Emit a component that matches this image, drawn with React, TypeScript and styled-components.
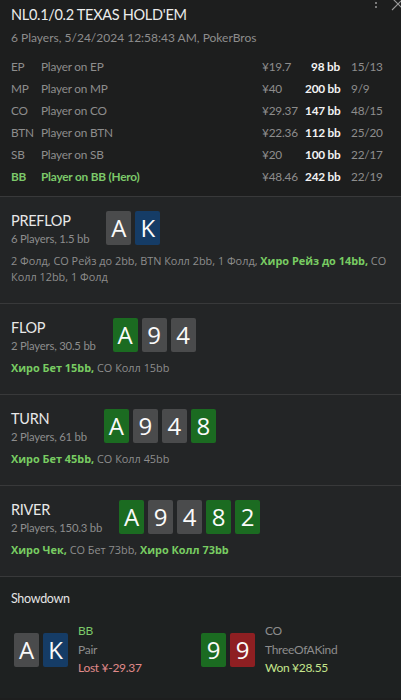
import styled, { createGlobalStyle } from "styled-components"

const GlobalStyle = createGlobalStyle`
  html, body {
    margin: 0;
    padding: 0;
    background: #1d1e1e;
  }
  body {
    font-family: Lato, "Open Sans", sans-serif;
    color: #e6e6e6;
  }
`

type Suit = "s" | "h" | "d" | "c"

const suitColor: Record<Suit, string> = {
  s: "#4a4b4c",
  h: "#8e1f22",
  d: "#153c66",
  c: "#1b6b21",
}

interface Player {
  pos: string
  name: string
  stack: string
  bb: string
  stats: string
  hero?: boolean
}

const players: Player[] = [
  { pos: "EP", name: "Player on EP", stack: "¥19.7", bb: "98 bb", stats: "15/13" },
  { pos: "MP", name: "Player on MP", stack: "¥40", bb: "200 bb", stats: "9/9" },
  { pos: "CO", name: "Player on CO", stack: "¥29.37", bb: "147 bb", stats: "48/15" },
  { pos: "BTN", name: "Player on BTN", stack: "¥22.36", bb: "112 bb", stats: "25/20" },
  { pos: "SB", name: "Player on SB", stack: "¥20", bb: "100 bb", stats: "22/17" },
  { pos: "BB", name: "Player on BB (Hero)", stack: "¥48.46", bb: "242 bb", stats: "22/19", hero: true },
]

type Action = { text: string; hero?: boolean }

interface Street {
  name: string
  info: string
  cards: [string, Suit][]
  actions: Action[]
}

const streets: Street[] = [
  {
    name: "PREFLOP",
    info: "6 Players, 1.5 bb",
    cards: [["A", "s"], ["K", "d"]],
    actions: [
      { text: "2 Фолд" },
      { text: "CO Рейз до 2bb" },
      { text: "BTN Колл 2bb" },
      { text: "1 Фолд" },
      { text: "Хиро Рейз до 14bb", hero: true },
      { text: "CO Колл 12bb" },
      { text: "1 Фолд" },
    ],
  },
  {
    name: "FLOP",
    info: "2 Players, 30.5 bb",
    cards: [["A", "c"], ["9", "s"], ["4", "s"]],
    actions: [{ text: "Хиро Бет 15bb", hero: true }, { text: "CO Колл 15bb" }],
  },
  {
    name: "TURN",
    info: "2 Players, 61 bb",
    cards: [["A", "c"], ["9", "s"], ["4", "s"], ["8", "c"]],
    actions: [{ text: "Хиро Бет 45bb", hero: true }, { text: "CO Колл 45bb" }],
  },
  {
    name: "RIVER",
    info: "2 Players, 150.3 bb",
    cards: [["A", "c"], ["9", "s"], ["4", "s"], ["8", "c"], ["2", "c"]],
    actions: [
      { text: "Хиро Чек", hero: true },
      { text: "CO Бет 73bb" },
      { text: "Хиро Колл 73bb", hero: true },
    ],
  },
]

const Page = styled.div`
  width: 401px;
  min-height: 700px;
  background: #1d1e1e;
`

const Header = styled.header`
  position: relative;
  padding: 5px 12px 8px 11px;
  border-bottom: 1px solid #38393a;
`

const Title = styled.h1`
  margin: 0;
  font-size: 14.5px;
  letter-spacing: -0.3px;
  font-weight: 400;
  line-height: 20px;
  color: #ececec;
`

const Subtitle = styled.div`
  margin-top: 5px;
  font-size: 12px;
  line-height: 16px;
  color: #8d8d8d;
`

const WindowControls = styled.div`
  position: absolute;
  top: -3px;
  right: -4px;
  display: flex;
  align-items: flex-start;
  gap: 13px;
  color: #9a9a9a;
`

const PlayerTable = styled.div`
  margin-top: 10px;
  display: grid;
  grid-template-columns: 30px 1fr 43px 35px 49px;
  font-size: 11.8px;
  letter-spacing: -0.2px;
`

const Cell = styled.div<{ $hero?: boolean; $strong?: boolean; $right?: boolean; $pad?: boolean }>`
  line-height: 22px;
  white-space: nowrap;
  color: ${({ $hero, $strong }) => ($strong ? "#f2f2f2" : $hero ? "#7cc96a" : "#8d8d8d")};
  font-weight: ${({ $strong, $hero }) => ($strong || $hero ? 700 : 400)};
  text-align: ${({ $right }) => ($right ? "right" : "left")};
  padding-left: ${({ $pad }) => ($pad ? "11px" : "0")};
`

const Section = styled.section`
  background: #232526;
  padding: 14px 11px 18px;
  border-bottom: 1px solid #38393a;
`

const StreetHead = styled.div`
  display: flex;
  align-items: flex-start;
  gap: 17px;
`

const StreetLabel = styled.div`
  display: flex;
  flex-direction: column;
  padding-top: 1px;
`

const StreetName = styled.div`
  font-size: 14.5px;
  letter-spacing: -0.3px;
  line-height: 18px;
  color: #e8e8e8;
`

const StreetInfo = styled.div`
  font-size: 11.3px;
  letter-spacing: -0.2px;
  line-height: 18px;
  color: #8d8d8d;
`

const Cards = styled.div`
  display: flex;
  gap: 4px;
`

const Card = styled.div<{ $suit: Suit }>`
  width: 25px;
  height: 34px;
  border-radius: 2px;
  background: ${({ $suit }) => suitColor[$suit]};
  color: #fafafa;
  font-family: "Open Sans", sans-serif;
  font-size: 24px;
  line-height: 34px;
  text-align: center;
`

const Actions = styled.p`
  margin: 5px 0 0;
  font-family: "Open Sans", "Noto Sans", sans-serif;
  font-size: 10.9px;
  line-height: 16px;
  color: #8d8d8d;
`

const ActionPart = styled.span<{ $hero?: boolean }>`
  color: ${({ $hero }) => ($hero ? "#78cc62" : "#8d8d8d")};
  font-weight: ${({ $hero }) => ($hero ? 700 : 400)};
`

const Showdown = styled.section`
  background: #1e2121;
  padding: 13px 11px 20px;
`

const ShowdownTitle = styled.div`
  font-size: 12.5px;
  letter-spacing: -0.3px;
  line-height: 18px;
  color: #e4e4e4;
`

const ShowdownGrid = styled.div`
  margin-top: 14px;
  display: grid;
  grid-template-columns: 187px 1fr;
  padding-left: 3px;
`

const Hand = styled.div`
  display: flex;
  align-items: center;
  gap: 10px;
`

const HandInfo = styled.div`
  display: flex;
  flex-direction: column;
  font-size: 12px;
  letter-spacing: -0.3px;
  line-height: 18.5px;
`

const HandLine = styled.div<{ $color: string }>`
  color: ${({ $color }) => $color};
`

const StreetBlock = ({ street }: { street: Street }) => (
  <Section>
    <StreetHead>
      <StreetLabel>
        <StreetName>{street.name}</StreetName>
        <StreetInfo>{street.info}</StreetInfo>
      </StreetLabel>
      <Cards>
        {street.cards.map(([rank, suit], i) => (
          <Card key={i} $suit={suit}>
            {rank}
          </Card>
        ))}
      </Cards>
    </StreetHead>
    <Actions>
      {street.actions.map((a, i) => {
        const last = i === street.actions.length - 1
        return (
          <ActionPart key={i} $hero={a.hero}>
            {last ? a.text : `${a.text}, `}
          </ActionPart>
        )
      })}
    </Actions>
  </Section>
)

const App = () => (
  <Page>
    <GlobalStyle />
    <Header>
      <WindowControls>
        <svg width="4" height="12" viewBox="0 0 4 12">
          <circle cx="2" cy="2" r="1" fill="currentColor" />
          <circle cx="2" cy="6" r="1" fill="currentColor" />
          <circle cx="2" cy="10" r="1" fill="currentColor" />
        </svg>
        <svg width="14" height="14" viewBox="0 0 14 14">
          <path d="M1 1 L13 13 M13 1 L1 13" stroke="currentColor" strokeWidth="1.1" />
        </svg>
      </WindowControls>
      <Title>NL0.1/0.2 TEXAS HOLD'EM</Title>
      <Subtitle>6 Players, 5/24/2024 12:58:43 AM, PokerBros</Subtitle>
      <PlayerTable>
        {players.map((p) => [
          <Cell key={p.pos + "p"} $hero={p.hero}>{p.pos}</Cell>,
          <Cell key={p.pos + "n"} $hero={p.hero}>{p.name}</Cell>,
          <Cell key={p.pos + "s"}>{p.stack}</Cell>,
          <Cell key={p.pos + "b"} $strong $right>{p.bb}</Cell>,
          <Cell key={p.pos + "t"} $pad>{p.stats}</Cell>,
        ])}
      </PlayerTable>
    </Header>
    {streets.map((s) => (
      <StreetBlock key={s.name} street={s} />
    ))}
    <Showdown>
      <ShowdownTitle>Showdown</ShowdownTitle>
      <ShowdownGrid>
        <Hand>
          <Cards>
            <Card $suit="s">A</Card>
            <Card $suit="d">K</Card>
          </Cards>
          <HandInfo>
            <HandLine $color="#7cc96a">BB</HandLine>
            <HandLine $color="#8d8d8d">Pair</HandLine>
            <HandLine $color="#e08a8a">Lost ¥-29.37</HandLine>
          </HandInfo>
        </Hand>
        <Hand>
          <Cards>
            <Card $suit="c">9</Card>
            <Card $suit="h">9</Card>
          </Cards>
          <HandInfo>
            <HandLine $color="#8d8d8d">CO</HandLine>
            <HandLine $color="#8d8d8d">ThreeOfAKind</HandLine>
            <HandLine $color="#c5e58c">Won ¥28.55</HandLine>
          </HandInfo>
        </Hand>
      </ShowdownGrid>
    </Showdown>
  </Page>
)

export default App
